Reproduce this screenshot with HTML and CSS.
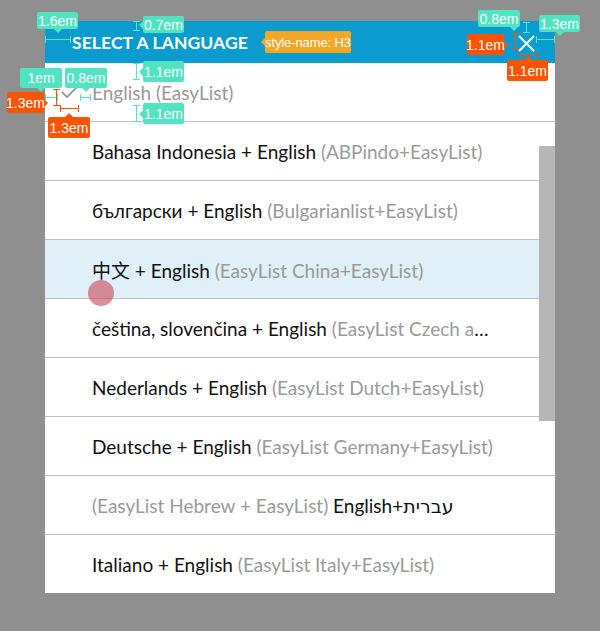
FILE: index.html
```html
<!DOCTYPE html>
<html>
<head>
<meta charset="utf-8">
<link rel="stylesheet" href="styles.css">
</head>
<body>
<div class="dialog">
  <div class="header">
    <h3 class="title">SELECT A LANGUAGE</h3>
    <svg class="close" width="17" height="17" viewBox="0 0 17 17"><path d="M1 1 L16 16 M16 1 L1 16" stroke="#fff" stroke-width="2" fill="none"/></svg>
  </div>
  <div class="list">
    <div class="row current">
      <svg class="check" width="17" height="13" viewBox="0 0 17 13"><path d="M1 6 L6 11 L16 1" stroke="#8a8a8a" stroke-width="1.6" fill="none"/></svg>
      <span class="text">English (EasyList)</span>
    </div>
    <div class="row"><span class="text">Bahasa Indonesia + English <span class="sub">(ABPindo+EasyList)</span></span></div>
    <div class="row"><span class="text">български + English <span class="sub">(Bulgarianlist+EasyList)</span></span></div>
    <div class="row selected"><span class="text">中文 + English <span class="sub">(EasyList China+EasyList)</span></span></div>
    <div class="row"><span class="text clip">čeština, slovenčina + English <span class="sub">(EasyList Czech and Slovak+EasyList)</span></span></div>
    <div class="row"><span class="text">Nederlands + English <span class="sub">(EasyList Dutch+EasyList)</span></span></div>
    <div class="row"><span class="text">Deutsche + English <span class="sub">(EasyList Germany+EasyList)</span></span></div>
    <div class="row"><span class="text"><span class="sub">(EasyList Hebrew + EasyList)</span> English+עברית</span></div>
    <div class="row last"><span class="text">Italiano + English <span class="sub">(EasyList Italy+EasyList)</span></span></div>
    <div class="scrollbar"></div>
  </div>
</div>

<div class="touch"></div>

<!-- measurement annotations -->
<div class="br-h teal" style="left:45px;top:36px;width:26px"></div>
<div class="tag teal p-down" style="left:37px;top:12px;width:41px;height:17px">1.6em</div>

<div class="br-v teal" style="left:133px;top:21px;height:10px"></div>
<div class="tag teal p-left" style="left:143px;top:16px;width:41px;height:17px">0.7em</div>

<div class="br-v teal" style="left:133px;top:63px;height:17px"></div>
<div class="tag teal p-left" style="left:143px;top:61px;width:41px;height:21px">1.1em</div>

<div class="br-v teal" style="left:133px;top:105px;height:17px"></div>
<div class="tag teal p-left" style="left:143px;top:103px;width:41px;height:21px">1.1em</div>

<div class="br-h teal" style="left:45px;top:94px;width:13px"></div>
<div class="tag teal p-down" style="left:20px;top:68px;width:42px;height:20px">1em</div>

<div class="br-h teal" style="left:80px;top:94px;width:11px"></div>
<div class="tag teal p-down" style="left:65px;top:68px;width:42px;height:20px">0.8em</div>

<div class="br-v orange" style="left:53px;top:89px;height:17px"></div>
<div class="tag orange p-right" style="left:7px;top:92px;width:37px;height:21px">1.3em</div>

<div class="br-h orange" style="left:60px;top:105px;width:19px"></div>
<div class="tag orange p-up" style="left:48px;top:117px;width:42px;height:21px">1.3em</div>

<div class="tag yellow p-left" style="left:265px;top:31px;width:86px;height:22px">style-name: H3</div>

<div class="br-v teal" style="left:523px;top:22px;height:11px"></div>
<div class="tag teal p-down-r" style="left:478px;top:10px;width:42px;height:17px">0.8em</div>

<div class="br-h teal" style="left:536px;top:36px;width:19px"></div>
<div class="tag teal p-down" style="left:539px;top:15px;width:41px;height:17px">1.3em</div>

<div class="br-v orange" style="left:512px;top:33px;height:17px"></div>
<div class="tag orange p-right" style="left:467px;top:34px;width:37px;height:21px">1.1em</div>

<div class="br-h orange" style="left:520px;top:51px;width:17px"></div>
<div class="tag orange p-up" style="left:507px;top:60px;width:41px;height:21px">1.1em</div>
</body>
</html>
```
FILE: styles.css
```css
html, body {
  margin: 0;
  padding: 0;
}
body {
  background: #8f8f8f;
  width: 600px;
  height: 631px;
  overflow: hidden;
  position: relative;
  font-family: Lato, "Noto Sans", "Noto Sans CJK SC", "DejaVu Sans", sans-serif;
}
.dialog {
  margin: 21px 0 0 45px;
  width: 510px;
  background: #fff;
}
.header {
  height: 42px;
  background: #0b9ccf;
  display: flex;
  align-items: center;
  padding-left: 27px;
  padding-right: 20px;
  box-sizing: border-box;
}
.title {
  margin: 0;
  flex: 1;
  color: #fff;
  font-size: 17.5px;
  font-weight: 700;
  letter-spacing: 0.1px;
}
.close {
  display: block;
  margin-top: 2px;
}
.list {
  position: relative;
}
.row {
  height: 59px;
  border-bottom: 1px solid #c2c2c2;
  display: flex;
  align-items: center;
  padding-left: 47px;
  box-sizing: border-box;
  font-size: 19px;
  color: #111;
}
.row.last {
  border-bottom: none;
  height: 58px;
}
.row.current {
  padding-left: 16px;
  color: #999;
}
.check {
  display: block;
  margin-right: 14px;
  margin-top: 1px;
}
.row.selected {
  background: #dff0f8;
}
.text {
  white-space: nowrap;
  padding-top: 1px;
}
.text.clip {
  display: block;
  width: 400px;
  overflow: hidden;
  text-overflow: ellipsis;
}
.sub {
  color: #9a9a9a;
}
.scrollbar {
  position: absolute;
  right: 0;
  top: 83px;
  width: 16px;
  height: 275px;
  background: #b6b6b6;
}
.touch {
  position: absolute;
  left: 88px;
  top: 280px;
  width: 26px;
  height: 26px;
  border-radius: 50%;
  background: rgba(200, 70, 86, 0.6);
}

/* annotations */
.tag {
  position: absolute;
  box-sizing: border-box;
  display: flex;
  align-items: center;
  justify-content: center;
  color: #fff;
  font-family: "Liberation Sans", Arial, sans-serif;
  font-size: 14px;
  border-radius: 2px;
  white-space: nowrap;
}
.tag.teal { background: #52e3c2; }
.tag.orange { background: #fa5400; }
.tag.yellow { background: #f5a623; font-size: 13px; letter-spacing: -0.1px; }
.tag::after {
  content: "";
  position: absolute;
  width: 0;
  height: 0;
  border: 4px solid transparent;
}
.tag.teal::after { --c: #52e3c2; }
.tag.orange::after { --c: #fa5400; }
.tag.yellow::after { --c: #f5a623; }
.p-down::after {
  top: 100%;
  left: 50%;
  margin-left: -4px;
  border-top-color: var(--c);
}
.p-down-r::after {
  top: 100%;
  right: 2px;
  border-top-color: var(--c);
}
.p-up::after {
  bottom: 100%;
  left: 50%;
  margin-left: -4px;
  border-bottom-color: var(--c);
}
.p-left::after {
  right: 100%;
  top: 50%;
  margin-top: -4px;
  border-right-color: var(--c);
}
.p-right::after {
  left: 100%;
  top: 50%;
  margin-top: -4px;
  border-left-color: var(--c);
}
.br-h {
  position: absolute;
  height: 7px;
  box-sizing: border-box;
  border-left: 1px solid var(--c);
  border-right: 1px solid var(--c);
}
.br-h::after {
  content: "";
  position: absolute;
  left: 0;
  right: 0;
  top: 3px;
  height: 1px;
  background: var(--c);
}
.br-v {
  position: absolute;
  width: 7px;
  box-sizing: border-box;
  border-top: 1px solid var(--c);
  border-bottom: 1px solid var(--c);
}
.br-v::after {
  content: "";
  position: absolute;
  top: 0;
  bottom: 0;
  left: 3px;
  width: 1px;
  background: var(--c);
}
.br-h.teal, .br-v.teal { --c: #52e3c2; }
.br-h.orange, .br-v.orange { --c: #fa5400; }
```
